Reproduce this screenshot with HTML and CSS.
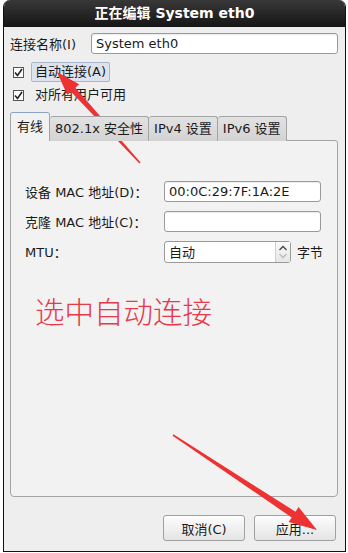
FILE: index.html
```html
<!DOCTYPE html>
<html lang="zh-CN">
<head>
    <meta charset="UTF-8">
    <title>正在编辑 System eth0</title>
    <link rel="stylesheet" href="styles.css">
</head>
<body>
    <div class="dialog">
        <!-- Title bar -->
        <div class="titlebar">正在编辑 System eth0</div>

        <div class="dialog-body">
            <div class="name-row">
                <label class="name-label">连接名称(I)</label>
                <div class="entry">System eth0</div>
            </div>

            <div class="check-row first">
                <span class="checkbox">
                    <svg width="11" height="11" viewBox="0 0 11 11"><path d="M2 5.5 L4.5 8.5 L9 2" fill="none" stroke="#222" stroke-width="1.6"/></svg>
                </span>
                <span class="check-text focused">自动连接(A)</span>
            </div>
            <div class="check-row">
                <span class="checkbox">
                    <svg width="11" height="11" viewBox="0 0 11 11"><path d="M2 5.5 L4.5 8.5 L9 2" fill="none" stroke="#222" stroke-width="1.6"/></svg>
                </span>
                <span class="check-text">对所有用户可用</span>
            </div>

            <!-- Tabs -->
            <div class="tabs">
                <div class="tab active">有线</div>
                <div class="tab">802.1x 安全性</div>
                <div class="tab">IPv4 设置</div>
                <div class="tab">IPv6 设置</div>
            </div>

            <div class="panel">
                <div class="field-row">
                    <span class="field-label">设备 MAC 地址(D)：</span>
                    <div class="entry small">00:0C:29:7F:1A:2E</div>
                </div>
                <div class="field-row">
                    <span class="field-label">克隆 MAC 地址(C)：</span>
                    <div class="entry small"></div>
                </div>
                <div class="field-row">
                    <span class="field-label">MTU：</span>
                    <div class="spin">
                        <span class="spin-value">自动</span>
                        <span class="spin-btns">
                            <svg width="12" height="20" viewBox="0 0 12 20">
                                <path d="M2.5 8 L6 4.5 L9.5 8" fill="none" stroke="#444" stroke-width="1.3"/>
                                <path d="M2.5 12 L6 15.5 L9.5 12" fill="none" stroke="#bbb" stroke-width="1.3"/>
                            </svg>
                        </span>
                    </div>
                    <span class="unit">字节</span>
                </div>

                <div class="note">选中自动连接</div>
            </div>

            <div class="buttons">
                <button class="btn">取消(C)</button>
                <button class="btn">应用...</button>
            </div>
        </div>
    </div>

    <!-- red annotation arrows drawn over the screenshot -->
    <svg class="arrows" width="348" height="553" viewBox="0 0 348 553">
        <polygon fill="#ec3232" points="140.6,162.5 75.4,87.7 79.1,84.3 57,72 67.3,95.1 71,91.7 139.4,163.5"/>
        <polygon fill="#ec3232" points="173.4,434.3 295.5,511.7 298.6,507.1 317,530 288.6,522.1 291.7,517.5 172.6,435.7"/>
    </svg>
</body>
</html>
```

FILE: styles.css
```css
/* Base */
* {
    margin: 0;
    padding: 0;
    box-sizing: border-box;
}

body {
    background: #fff;
    font-family: "DejaVu Sans", "Noto Sans CJK SC", sans-serif;
    font-size: 13px;
    color: #1a1a1a;
    position: relative;
    width: 348px;
    height: 553px;
    overflow: hidden;
}

/* Dialog window */
.dialog {
    margin-left: 3px;
    width: 343px;
    height: 552px;
    background: #eeeeee;
    border: 1px solid #111;
    border-top: none;
    border-radius: 7px 7px 0 0;
    overflow: hidden;
}

.titlebar {
    height: 27px;
    line-height: 27px;
    text-align: center;
    color: #fff;
    font-weight: bold;
    font-size: 14px;
    background: linear-gradient(#383838, #161616);
}

.dialog-body {
    padding: 6px 7px 0 6px;
}

/* Connection name */
.name-row {
    display: flex;
    align-items: center;
    height: 21px;
}

.name-label {
    width: 81px;
}

.entry {
    flex: 1;
    height: 21px;
    line-height: 19px;
    padding-left: 4px;
    background: #fff;
    border: 1px solid #9a9a9a;
    border-radius: 3px;
    box-shadow: inset 0 1px 1px rgba(0,0,0,0.08);
}

.entry.small {
    flex: none;
    width: 157px;
}

/* Check boxes */
.check-row {
    display: flex;
    align-items: center;
    height: 20px;
    margin-top: 3px;
}

.check-row.first {
    margin-top: 8px;
}

.checkbox {
    width: 11px;
    height: 11px;
    margin-left: 3px;
    margin-right: 7px;
    background: #fff;
    border: 1px solid #555;
    display: flex;
}

.checkbox svg {
    margin: -1px;
}

.check-text {
    padding: 0 3px;
    line-height: 18px;
    border: 1px solid transparent;
}

.check-text.focused {
    background: #dde3ee;
    border-color: #a9b6cc;
    border-radius: 2px;
}

/* Notebook tabs */
.tabs {
    display: flex;
    align-items: flex-end;
    height: 29px;
    margin-top: 7px;
    position: relative;
    z-index: 1;
}

.tab {
    height: 25px;
    line-height: 24px;
    padding: 0 5px;
    background: linear-gradient(#e2e2e2, #d3d3d3);
    border: 1px solid #a4a4a4;
    border-bottom: none;
    border-left: none;
    border-radius: 3px 3px 0 0;
}

.tab.active {
    height: 29px;
    line-height: 28px;
    background: #f2f2f2;
    border-left: 1px solid #a4a4a4;
    border-top-color: #8aa2c4;
    padding: 0 6px;
    width: 40px;
}

.panel {
    height: 357px;
    margin-top: -1px;
    padding: 40px 0 0 14px;
    background: #f2f2f2;
    border: 1px solid #a4a4a4;
    border-radius: 0 3px 4px 4px;
}

.field-row {
    display: flex;
    align-items: center;
    height: 21px;
    margin-bottom: 9px;
}

.field-label {
    width: 139px;
}

.spin {
    width: 127px;
    height: 22px;
    display: flex;
    align-items: center;
    background: #fff;
    border: 1px solid #9a9a9a;
    border-radius: 3px;
}

.spin-value {
    flex: 1;
    padding-left: 4px;
}

.spin-btns {
    width: 15px;
    height: 20px;
    display: flex;
    justify-content: center;
    background: linear-gradient(#fafafa, #e6e6e6);
    border-left: 1px solid #d0d0d0;
}

.unit {
    margin-left: 6px;
}

.note {
    margin: 30px 0 0 10px;
    font-size: 29.5px;
    line-height: 36px;
    color: #e6394a;
    font-family: "Noto Sans CJK SC", sans-serif;
    font-weight: 300;
}

/* Buttons */
.buttons {
    display: flex;
    justify-content: flex-end;
    gap: 9px;
    margin-top: 18px;
    padding-right: 2px;
}

.btn {
    width: 82px;
    height: 26px;
    font-family: "DejaVu Sans", "Noto Sans CJK SC", sans-serif;
    font-size: 13px;
    color: #1a1a1a;
    background: linear-gradient(#fdfdfd, #e4e4e4);
    border: 1px solid #a0a0a0;
    border-radius: 3px;
}

/* Annotation overlay */
.arrows {
    position: absolute;
    top: 0;
    left: 0;
    pointer-events: none;
}
```
